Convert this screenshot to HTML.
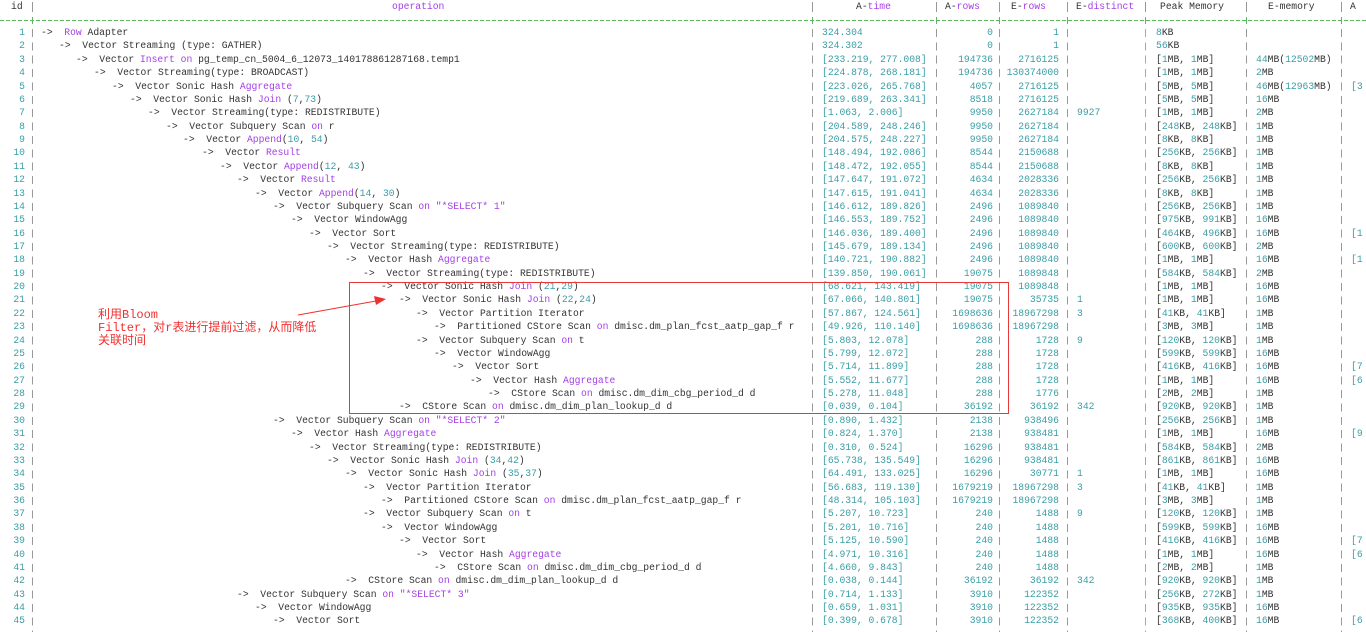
<!DOCTYPE html>
<html><head><meta charset="utf-8"><style>
html,body{margin:0;padding:0;background:#fff;width:1366px;height:632px;overflow:hidden;position:relative}
body{font-family:"Liberation Mono",monospace;font-size:9.7px;color:#333}
.r{position:absolute;left:0;width:1366px;height:14px;line-height:14px;white-space:pre}
.r s,.r b{position:absolute;text-decoration:none;font-weight:normal;top:0}
.id{right:1341px;color:#3a9ea5;text-align:right}
.t{left:822px}.ar{right:373px;text-align:right}.er{right:307px;text-align:right}
.ed{left:1077px}.pm{left:1156px}.em{left:1256px}.ax{left:1351px}
k{color:#a53ee6}n{color:#3a9ea5}
.t,.ar,.er,.ed,.ax{color:#3a9ea5}
.pipe{position:absolute;top:26px;height:606px;width:1px;background:repeating-linear-gradient(to bottom,transparent 0,transparent 3px,#999 3px,#999 11px,transparent 11px,transparent 13.372px)}
.hp{position:absolute;top:2px;height:10px;width:1px;background:#999}
.h{position:absolute;top:0;line-height:14px;white-space:pre}
.sep{position:absolute;top:20px;left:0;width:1366px;height:1px;background:repeating-linear-gradient(to right,#5cb85c 0,#5cb85c 4px,transparent 4px,transparent 6px)}
.pl{position:absolute;top:17px;width:1px;height:7px;background:#5cb85c}
</style></head><body>
<div class="h" style="left:11px">id</div>
<div class="h" style="left:392px;color:#a53ee6">operation</div>
<div class="h" style="left:856px">A-<k>time</k></div>
<div class="h" style="left:945px">A-<k>rows</k></div>
<div class="h" style="left:1011px">E-<k>rows</k></div>
<div class="h" style="left:1076px">E-<k>distinct</k></div>
<div class="h" style="left:1160px">Peak Memory</div>
<div class="h" style="left:1268px">E-memory</div>
<div class="h" style="left:1350px">A</div>
<div class="hp" style="left:32px"></div><div class="hp" style="left:812px"></div><div class="hp" style="left:936px"></div><div class="hp" style="left:999px"></div><div class="hp" style="left:1067px"></div><div class="hp" style="left:1145px"></div><div class="hp" style="left:1246px"></div><div class="hp" style="left:1341px"></div>
<div class="sep"></div>
<div class="pl" style="left:32px"></div><div class="pl" style="left:812px"></div><div class="pl" style="left:936px"></div><div class="pl" style="left:999px"></div><div class="pl" style="left:1067px"></div><div class="pl" style="left:1145px"></div><div class="pl" style="left:1246px"></div><div class="pl" style="left:1341px"></div>
<div class="pipe" style="left:32px"></div><div class="pipe" style="left:812px"></div><div class="pipe" style="left:936px"></div><div class="pipe" style="left:999px"></div><div class="pipe" style="left:1067px"></div><div class="pipe" style="left:1145px;background:repeating-linear-gradient(to bottom,transparent 0,transparent 3px,#c9a070 3px,#c9a070 11px,transparent 11px,transparent 13.372px)"></div><div class="pipe" style="left:1246px"></div><div class="pipe" style="left:1341px"></div>

<div class="r" style="top:26px"><b class="id">1</b><s style="left:41px">->  <k>Row</k> Adapter</s><s class="t">324.304</s><s class="ar">0</s><s class="er">1</s><s class="pm"><n>8</n>KB</s></div>
<div class="r" style="top:39.4px"><b class="id">2</b><s style="left:59px">->  Vector Streaming (type: GATHER)</s><s class="t">324.302</s><s class="ar">0</s><s class="er">1</s><s class="pm"><n>56</n>KB</s></div>
<div class="r" style="top:52.7px"><b class="id">3</b><s style="left:76px">->  Vector <k>Insert on</k> pg_temp_cn_5004_6_12073_140178861287168.temp1</s><s class="t">[233.219, 277.008]</s><s class="ar">194736</s><s class="er">2716125</s><s class="pm">[<n>1</n>MB, <n>1</n>MB]</s><s class="em"><n>44</n>MB(<n>12502</n>MB)</s></div>
<div class="r" style="top:66.1px"><b class="id">4</b><s style="left:94px">->  Vector Streaming(type: BROADCAST)</s><s class="t">[224.878, 268.181]</s><s class="ar">194736</s><s class="er">130374000</s><s class="pm">[<n>1</n>MB, <n>1</n>MB]</s><s class="em"><n>2</n>MB</s></div>
<div class="r" style="top:79.5px"><b class="id">5</b><s style="left:112px">->  Vector Sonic Hash <k>Aggregate</k></s><s class="t">[223.026, 265.768]</s><s class="ar">4057</s><s class="er">2716125</s><s class="pm">[<n>5</n>MB, <n>5</n>MB]</s><s class="em"><n>46</n>MB(<n>12963</n>MB)</s><s class="ax">[3</s></div>
<div class="r" style="top:92.9px"><b class="id">6</b><s style="left:130px">->  Vector Sonic Hash <k>Join</k> (<n>7</n>,<n>73</n>)</s><s class="t">[219.689, 263.341]</s><s class="ar">8518</s><s class="er">2716125</s><s class="pm">[<n>5</n>MB, <n>5</n>MB]</s><s class="em"><n>16</n>MB</s></div>
<div class="r" style="top:106.2px"><b class="id">7</b><s style="left:148px">->  Vector Streaming(type: REDISTRIBUTE)</s><s class="t">[1.063, 2.006]</s><s class="ar">9950</s><s class="er">2627184</s><s class="ed">9927</s><s class="pm">[<n>1</n>MB, <n>1</n>MB]</s><s class="em"><n>2</n>MB</s></div>
<div class="r" style="top:119.6px"><b class="id">8</b><s style="left:166px">->  Vector Subquery Scan <k>on</k> r</s><s class="t">[204.589, 248.246]</s><s class="ar">9950</s><s class="er">2627184</s><s class="pm">[<n>248</n>KB, <n>248</n>KB]</s><s class="em"><n>1</n>MB</s></div>
<div class="r" style="top:133px"><b class="id">9</b><s style="left:183px">->  Vector <k>Append</k>(<n>10</n>, <n>54</n>)</s><s class="t">[204.575, 248.227]</s><s class="ar">9950</s><s class="er">2627184</s><s class="pm">[<n>8</n>KB, <n>8</n>KB]</s><s class="em"><n>1</n>MB</s></div>
<div class="r" style="top:146.3px"><b class="id">10</b><s style="left:202px">->  Vector <k>Result</k></s><s class="t">[148.494, 192.086]</s><s class="ar">8544</s><s class="er">2150688</s><s class="pm">[<n>256</n>KB, <n>256</n>KB]</s><s class="em"><n>1</n>MB</s></div>
<div class="r" style="top:159.7px"><b class="id">11</b><s style="left:220px">->  Vector <k>Append</k>(<n>12</n>, <n>43</n>)</s><s class="t">[148.472, 192.055]</s><s class="ar">8544</s><s class="er">2150688</s><s class="pm">[<n>8</n>KB, <n>8</n>KB]</s><s class="em"><n>1</n>MB</s></div>
<div class="r" style="top:173.1px"><b class="id">12</b><s style="left:237px">->  Vector <k>Result</k></s><s class="t">[147.647, 191.072]</s><s class="ar">4634</s><s class="er">2028336</s><s class="pm">[<n>256</n>KB, <n>256</n>KB]</s><s class="em"><n>1</n>MB</s></div>
<div class="r" style="top:186.5px"><b class="id">13</b><s style="left:255px">->  Vector <k>Append</k>(<n>14</n>, <n>30</n>)</s><s class="t">[147.615, 191.041]</s><s class="ar">4634</s><s class="er">2028336</s><s class="pm">[<n>8</n>KB, <n>8</n>KB]</s><s class="em"><n>1</n>MB</s></div>
<div class="r" style="top:199.8px"><b class="id">14</b><s style="left:273px">->  Vector Subquery Scan <k>on "*SELECT* 1"</k></s><s class="t">[146.612, 189.826]</s><s class="ar">2496</s><s class="er">1089840</s><s class="pm">[<n>256</n>KB, <n>256</n>KB]</s><s class="em"><n>1</n>MB</s></div>
<div class="r" style="top:213.2px"><b class="id">15</b><s style="left:291px">->  Vector WindowAgg</s><s class="t">[146.553, 189.752]</s><s class="ar">2496</s><s class="er">1089840</s><s class="pm">[<n>975</n>KB, <n>991</n>KB]</s><s class="em"><n>16</n>MB</s></div>
<div class="r" style="top:226.6px"><b class="id">16</b><s style="left:309px">->  Vector Sort</s><s class="t">[146.036, 189.400]</s><s class="ar">2496</s><s class="er">1089840</s><s class="pm">[<n>464</n>KB, <n>496</n>KB]</s><s class="em"><n>16</n>MB</s><s class="ax">[1</s></div>
<div class="r" style="top:239.95px"><b class="id">17</b><s style="left:327px">->  Vector Streaming(type: REDISTRIBUTE)</s><s class="t">[145.679, 189.134]</s><s class="ar">2496</s><s class="er">1089840</s><s class="pm">[<n>600</n>KB, <n>600</n>KB]</s><s class="em"><n>2</n>MB</s></div>
<div class="r" style="top:253.3px"><b class="id">18</b><s style="left:345px">->  Vector Hash <k>Aggregate</k></s><s class="t">[140.721, 190.882]</s><s class="ar">2496</s><s class="er">1089840</s><s class="pm">[<n>1</n>MB, <n>1</n>MB]</s><s class="em"><n>16</n>MB</s><s class="ax">[1</s></div>
<div class="r" style="top:266.7px"><b class="id">19</b><s style="left:363px">->  Vector Streaming(type: REDISTRIBUTE)</s><s class="t">[139.850, 190.061]</s><s class="ar">19075</s><s class="er">1089848</s><s class="pm">[<n>584</n>KB, <n>584</n>KB]</s><s class="em"><n>2</n>MB</s></div>
<div class="r" style="top:280.1px"><b class="id">20</b><s style="left:381px">->  Vector Sonic Hash <k>Join</k> (<n>21</n>,<n>29</n>)</s><s class="t">[68.621, 143.419]</s><s class="ar">19075</s><s class="er">1089848</s><s class="pm">[<n>1</n>MB, <n>1</n>MB]</s><s class="em"><n>16</n>MB</s></div>
<div class="r" style="top:293.4px"><b class="id">21</b><s style="left:399px">->  Vector Sonic Hash <k>Join</k> (<n>22</n>,<n>24</n>)</s><s class="t">[67.066, 140.801]</s><s class="ar">19075</s><s class="er">35735</s><s class="ed">1</s><s class="pm">[<n>1</n>MB, <n>1</n>MB]</s><s class="em"><n>16</n>MB</s></div>
<div class="r" style="top:306.8px"><b class="id">22</b><s style="left:416px">->  Vector Partition Iterator</s><s class="t">[57.867, 124.561]</s><s class="ar">1698636</s><s class="er">18967298</s><s class="ed">3</s><s class="pm">[<n>41</n>KB, <n>41</n>KB]</s><s class="em"><n>1</n>MB</s></div>
<div class="r" style="top:320.2px"><b class="id">23</b><s style="left:434px">->  Partitioned CStore Scan <k>on</k> dmisc.dm_plan_fcst_aatp_gap_f r</s><s class="t">[49.926, 110.140]</s><s class="ar">1698636</s><s class="er">18967298</s><s class="pm">[<n>3</n>MB, <n>3</n>MB]</s><s class="em"><n>1</n>MB</s></div>
<div class="r" style="top:333.6px"><b class="id">24</b><s style="left:416px">->  Vector Subquery Scan <k>on</k> t</s><s class="t">[5.803, 12.078]</s><s class="ar">288</s><s class="er">1728</s><s class="ed">9</s><s class="pm">[<n>120</n>KB, <n>120</n>KB]</s><s class="em"><n>1</n>MB</s></div>
<div class="r" style="top:346.9px"><b class="id">25</b><s style="left:434px">->  Vector WindowAgg</s><s class="t">[5.799, 12.072]</s><s class="ar">288</s><s class="er">1728</s><s class="pm">[<n>599</n>KB, <n>599</n>KB]</s><s class="em"><n>16</n>MB</s></div>
<div class="r" style="top:360.3px"><b class="id">26</b><s style="left:452px">->  Vector Sort</s><s class="t">[5.714, 11.899]</s><s class="ar">288</s><s class="er">1728</s><s class="pm">[<n>416</n>KB, <n>416</n>KB]</s><s class="em"><n>16</n>MB</s><s class="ax">[7</s></div>
<div class="r" style="top:373.7px"><b class="id">27</b><s style="left:470px">->  Vector Hash <k>Aggregate</k></s><s class="t">[5.552, 11.677]</s><s class="ar">288</s><s class="er">1728</s><s class="pm">[<n>1</n>MB, <n>1</n>MB]</s><s class="em"><n>16</n>MB</s><s class="ax">[6</s></div>
<div class="r" style="top:387px"><b class="id">28</b><s style="left:488px">->  CStore Scan <k>on</k> dmisc.dm_dim_cbg_period_d d</s><s class="t">[5.278, 11.048]</s><s class="ar">288</s><s class="er">1776</s><s class="pm">[<n>2</n>MB, <n>2</n>MB]</s><s class="em"><n>1</n>MB</s></div>
<div class="r" style="top:400.4px"><b class="id">29</b><s style="left:399px">->  CStore Scan <k>on</k> dmisc.dm_dim_plan_lookup_d d</s><s class="t">[0.039, 0.104]</s><s class="ar">36192</s><s class="er">36192</s><s class="ed">342</s><s class="pm">[<n>920</n>KB, <n>920</n>KB]</s><s class="em"><n>1</n>MB</s></div>
<div class="r" style="top:413.8px"><b class="id">30</b><s style="left:273px">->  Vector Subquery Scan <k>on "*SELECT* 2"</k></s><s class="t">[0.890, 1.432]</s><s class="ar">2138</s><s class="er">938496</s><s class="pm">[<n>256</n>KB, <n>256</n>KB]</s><s class="em"><n>1</n>MB</s></div>
<div class="r" style="top:427.2px"><b class="id">31</b><s style="left:291px">->  Vector Hash <k>Aggregate</k></s><s class="t">[0.824, 1.370]</s><s class="ar">2138</s><s class="er">938481</s><s class="pm">[<n>1</n>MB, <n>1</n>MB]</s><s class="em"><n>16</n>MB</s><s class="ax">[9</s></div>
<div class="r" style="top:440.5px"><b class="id">32</b><s style="left:309px">->  Vector Streaming(type: REDISTRIBUTE)</s><s class="t">[0.310, 0.524]</s><s class="ar">16296</s><s class="er">938481</s><s class="pm">[<n>584</n>KB, <n>584</n>KB]</s><s class="em"><n>2</n>MB</s></div>
<div class="r" style="top:453.9px"><b class="id">33</b><s style="left:327px">->  Vector Sonic Hash <k>Join</k> (<n>34</n>,<n>42</n>)</s><s class="t">[65.738, 135.549]</s><s class="ar">16296</s><s class="er">938481</s><s class="pm">[<n>861</n>KB, <n>861</n>KB]</s><s class="em"><n>16</n>MB</s></div>
<div class="r" style="top:467.3px"><b class="id">34</b><s style="left:345px">->  Vector Sonic Hash <k>Join</k> (<n>35</n>,<n>37</n>)</s><s class="t">[64.491, 133.025]</s><s class="ar">16296</s><s class="er">30771</s><s class="ed">1</s><s class="pm">[<n>1</n>MB, <n>1</n>MB]</s><s class="em"><n>16</n>MB</s></div>
<div class="r" style="top:480.6px"><b class="id">35</b><s style="left:363px">->  Vector Partition Iterator</s><s class="t">[56.683, 119.130]</s><s class="ar">1679219</s><s class="er">18967298</s><s class="ed">3</s><s class="pm">[<n>41</n>KB, <n>41</n>KB]</s><s class="em"><n>1</n>MB</s></div>
<div class="r" style="top:494px"><b class="id">36</b><s style="left:381px">->  Partitioned CStore Scan <k>on</k> dmisc.dm_plan_fcst_aatp_gap_f r</s><s class="t">[48.314, 105.103]</s><s class="ar">1679219</s><s class="er">18967298</s><s class="pm">[<n>3</n>MB, <n>3</n>MB]</s><s class="em"><n>1</n>MB</s></div>
<div class="r" style="top:507.4px"><b class="id">37</b><s style="left:363px">->  Vector Subquery Scan <k>on</k> t</s><s class="t">[5.207, 10.723]</s><s class="ar">240</s><s class="er">1488</s><s class="ed">9</s><s class="pm">[<n>120</n>KB, <n>120</n>KB]</s><s class="em"><n>1</n>MB</s></div>
<div class="r" style="top:520.8px"><b class="id">38</b><s style="left:381px">->  Vector WindowAgg</s><s class="t">[5.201, 10.716]</s><s class="ar">240</s><s class="er">1488</s><s class="pm">[<n>599</n>KB, <n>599</n>KB]</s><s class="em"><n>16</n>MB</s></div>
<div class="r" style="top:534.1px"><b class="id">39</b><s style="left:399px">->  Vector Sort</s><s class="t">[5.125, 10.590]</s><s class="ar">240</s><s class="er">1488</s><s class="pm">[<n>416</n>KB, <n>416</n>KB]</s><s class="em"><n>16</n>MB</s><s class="ax">[7</s></div>
<div class="r" style="top:547.5px"><b class="id">40</b><s style="left:416px">->  Vector Hash <k>Aggregate</k></s><s class="t">[4.971, 10.316]</s><s class="ar">240</s><s class="er">1488</s><s class="pm">[<n>1</n>MB, <n>1</n>MB]</s><s class="em"><n>16</n>MB</s><s class="ax">[6</s></div>
<div class="r" style="top:560.9px"><b class="id">41</b><s style="left:434px">->  CStore Scan <k>on</k> dmisc.dm_dim_cbg_period_d d</s><s class="t">[4.660, 9.843]</s><s class="ar">240</s><s class="er">1488</s><s class="pm">[<n>2</n>MB, <n>2</n>MB]</s><s class="em"><n>1</n>MB</s></div>
<div class="r" style="top:574.2px"><b class="id">42</b><s style="left:345px">->  CStore Scan <k>on</k> dmisc.dm_dim_plan_lookup_d d</s><s class="t">[0.038, 0.144]</s><s class="ar">36192</s><s class="er">36192</s><s class="ed">342</s><s class="pm">[<n>920</n>KB, <n>920</n>KB]</s><s class="em"><n>1</n>MB</s></div>
<div class="r" style="top:587.6px"><b class="id">43</b><s style="left:237px">->  Vector Subquery Scan <k>on "*SELECT* 3"</k></s><s class="t">[0.714, 1.133]</s><s class="ar">3910</s><s class="er">122352</s><s class="pm">[<n>256</n>KB, <n>272</n>KB]</s><s class="em"><n>1</n>MB</s></div>
<div class="r" style="top:601px"><b class="id">44</b><s style="left:255px">->  Vector WindowAgg</s><s class="t">[0.659, 1.031]</s><s class="ar">3910</s><s class="er">122352</s><s class="pm">[<n>935</n>KB, <n>935</n>KB]</s><s class="em"><n>16</n>MB</s></div>
<div class="r" style="top:614.4px"><b class="id">45</b><s style="left:273px">->  Vector Sort</s><s class="t">[0.399, 0.678]</s><s class="ar">3910</s><s class="er">122352</s><s class="pm">[<n>368</n>KB, <n>400</n>KB]</s><s class="em"><n>16</n>MB</s><s class="ax">[6</s></div>

<div style="position:absolute;left:349px;top:282px;width:658px;height:130px;border:1px solid #e8393a"></div>
<div style="position:absolute;left:98px;top:309px;color:#f0302f;font-family:'Liberation Mono','Noto Sans CJK SC',monospace;font-size:12px;line-height:13px;white-space:pre">利用Bloom
Filter，对r表进行提前过滤，从而降低
关联时间</div>
<svg style="position:absolute;left:0;top:0" width="1366" height="632"><line x1="298" y1="315" x2="376" y2="301" stroke="#f0302f" stroke-width="1"/><polygon points="386,299 374,296 376,305" fill="#f0302f"/></svg>
</body></html>
